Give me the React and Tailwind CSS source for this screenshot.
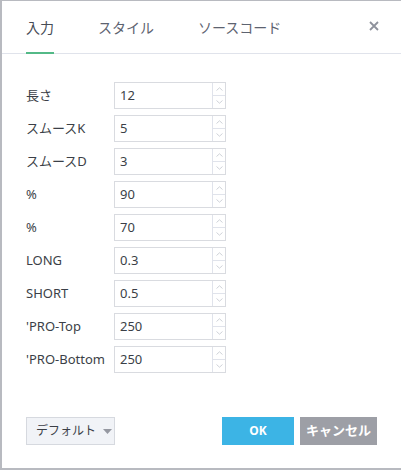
import React from "react";

const rows = [
  { label: "長さ", value: "12" },
  { label: "スムースK", value: "5" },
  { label: "スムースD", value: "3" },
  { label: "%", value: "90" },
  { label: "%", value: "70" },
  { label: "LONG", value: "0.3" },
  { label: "SHORT", value: "0.5" },
  { label: "'PRO-Top", value: "250" },
  { label: "'PRO-Bottom", value: "250" },
];

const Spinner = () => (
  <div className="flex flex-col w-[13px] border-l border-[#e0e3eb] h-full">
    <div className="flex-1 flex items-center justify-center border-b border-[#e0e3eb]">
      <svg width="7" height="4" viewBox="0 0 7 4">
        <path d="M0.5 3.5 L3.5 0.8 L6.5 3.5" fill="none" stroke="#c3c6ce" strokeWidth="0.8" />
      </svg>
    </div>
    <div className="flex-1 flex items-center justify-center">
      <svg width="7" height="4" viewBox="0 0 7 4">
        <path d="M0.5 0.5 L3.5 3.2 L6.5 0.5" fill="none" stroke="#c3c6ce" strokeWidth="0.8" />
      </svg>
    </div>
  </div>
);

const App = () => {
  return (
    <div
      className="w-[401px] h-[472px] bg-white overflow-hidden"
      style={{ fontFamily: '"Noto Sans", "Noto Sans CJK JP", sans-serif' }}
    >
      <div className="h-[470px] border-l-2 border-t border-b-2 border-[#b8bac0] flex flex-col">
        {/* tabs */}
        <div className="flex items-end h-[53px] border-b border-[#e0e3eb] pl-[24px] pr-[20px] relative">
          <div className="flex flex-col mr-[44px]">
            <span className="text-[14px] leading-[20px] text-[#474c56] pb-[14px]">入力</span>
            <div className="h-[2px] bg-[#53b987] -mb-[1px]" />
          </div>
          <span className="text-[14px] leading-[20px] text-[#5d6370] pb-[15px] mr-[44px]">スタイル</span>
          <span className="text-[14px] leading-[20px] text-[#5d6370] pb-[15px]">ソースコード</span>
          <button className="absolute right-[20px] top-[18px] w-[14px] h-[14px] flex items-center justify-center">
            <svg width="10" height="10" viewBox="0 0 10 10">
              <path d="M1 1 L9 9 M9 1 L1 9" stroke="#8e929c" strokeWidth="1.8" />
            </svg>
          </button>
        </div>

        {/* fields */}
        <div className="flex flex-col gap-[6px] pt-[28px] pl-[24px]">
          {rows.map((r, i) => (
            <div key={i} className="flex items-center h-[27px]">
              <span className="w-[88px] text-[13px] text-[#3b3f47] whitespace-nowrap">{r.label}</span>
              <div className="w-[112px] h-[27px] border border-[#d9dbe0] flex items-center">
                <span className="flex-1 pl-[5px] text-[13px] text-[#3b3f47]">{r.value}</span>
                <Spinner />
              </div>
            </div>
          ))}
        </div>

        <div className="flex-1" />

        {/* footer */}
        <div className="flex items-center pl-[24px] pr-[24px] pb-[23px]">
          <button className="w-[89px] h-[28px] pl-[9px] bg-[#f1f3f7] border border-[#d6d9df] flex items-center gap-[7px] text-[12px] text-[#3b3f47]">
            デフォルト
            <svg width="9" height="5" viewBox="0 0 9 5">
              <path d="M0 0 L9 0 L4.5 5 Z" fill="#9598a1" />
            </svg>
          </button>
          <div className="flex-1" />
          <button className="w-[72px] h-[28px] bg-[#3cb4e5] text-white text-[12px] font-bold mr-[6px]">OK</button>
          <button className="w-[77px] h-[28px] bg-[#9d9fa6] text-white text-[13px] font-bold">キャンセル</button>
        </div>
      </div>
    </div>
  );
};

export default App;
